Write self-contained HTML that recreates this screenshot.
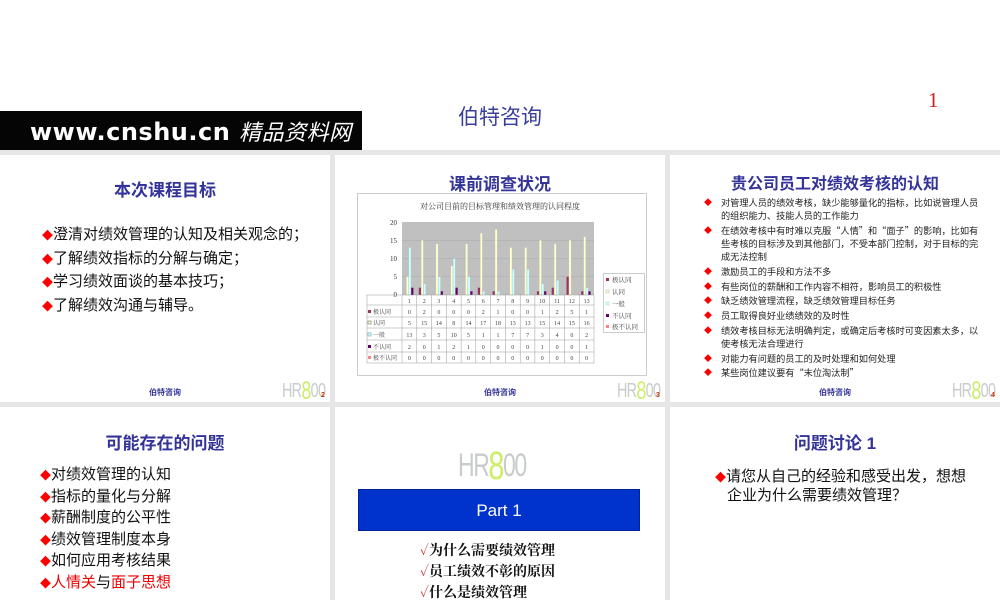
<!DOCTYPE html>
<html><head><meta charset="utf-8">
<style>
*{margin:0;padding:0;box-sizing:border-box}
body{width:1000px;height:600px;overflow:hidden;background:#fff;position:relative;font-family:"Liberation Sans","Noto Sans CJK SC",sans-serif}
.abs{position:absolute}
.p{position:absolute;background:#fff;overflow:hidden}
.t{position:absolute;left:0;right:0;text-align:center;color:#333399;font-weight:bold;font-family:"Liberation Sans","Noto Sans CJK SC",sans-serif}
.ft{position:absolute;left:0;right:0;text-align:center;color:#333399;font-size:8px;font-weight:bold}
.dm{color:#f00;font-size:11px}
.lg{position:absolute;font-family:"Liberation Sans",sans-serif;color:#c8cccc;letter-spacing:-1px;transform-origin:0 0;white-space:nowrap;line-height:1}
.lg b{color:#ccee66;font-weight:normal}
.sm{left:282px;top:222px;font-size:20px;transform:scaleX(0.72)}
.sm b{font-size:25px;position:relative;top:2px}
.it{position:relative;padding-left:17px;margin-bottom:1.5px}
.it .dm{position:absolute;left:0;font-size:8px}
</style></head><body>
<div class="abs" style="left:0;top:111px;width:362px;height:39px;background:#050505;"></div>
<div class="abs" style="left:30px;top:116px;color:#fff;font-size:24px;font-weight:bold;font-family:'DejaVu Sans',sans-serif;letter-spacing:0.5px;line-height:30px">www.cnshu.cn <i style="font-weight:normal;font-family:'Noto Sans CJK SC',sans-serif;font-size:22px">精品资料网</i></div>
<div class="abs" style="left:440px;top:103px;width:120px;text-align:center;color:#3a3f9a;font-size:21px;line-height:30px">伯特咨询</div>
<div class="abs" style="left:928px;top:88px;color:#cc2222;font-size:21px;font-family:'Liberation Serif',serif">1</div>
<div class="abs" style="left:0;top:150px;width:1000px;height:450px;background:#e6e6e6"></div>

<!-- panel 1 -->
<div class="p" style="left:0;top:155px;width:330px;height:247px">
<div class="t" style="top:21px;font-size:17px">本次课程目标</div>
<div class="abs" style="left:42px;top:69px;font-size:15px;line-height:22.5px;color:#111">
<div><span class="dm">◆</span>澄清对绩效管理的认知及相关观念的；</div>
<div><span class="dm">◆</span>了解绩效指标的分解与确定；</div>
<div><span class="dm">◆</span>学习绩效面谈的基本技巧；</div>
<div><span class="dm">◆</span>了解绩效沟通与辅导。</div></div>
<div class="ft" style="top:232px">伯特咨询</div>
<div class="lg sm">HR<b>8</b>00</div>
<div class="abs" style="left:321px;top:237px;color:#cc3300;font-size:7px;font-weight:bold">2</div>
</div>

<!-- panel 2 -->
<div class="p" style="left:335px;top:155px;width:330px;height:247px">
<div class="t" style="top:15px;font-size:17px">课前调查状况</div>
<div class="ft" style="top:232px">伯特咨询</div>
<div class="lg sm">HR<b>8</b>00</div>
<div class="abs" style="left:321px;top:237px;color:#cc3300;font-size:7px;font-weight:bold">3</div>
</div>
<svg class="abs" style="left:0;top:0" width="1000" height="600" font-family="Liberation Serif,Noto Serif CJK SC,serif">
<rect x="357.5" y="193.5" width="289" height="182" fill="#fff" stroke="#ccc"/>
<text x="500" y="209" font-size="8" text-anchor="middle" fill="#333">对公司目前的目标管理和绩效管理的认同程度</text>
<rect x="402" y="222" width="192" height="73" fill="#c0c0c0"/>
<g stroke="#aaa" stroke-width="0.5"><line x1="402" y1="240.25" x2="594" y2="240.25"/><line x1="402" y1="258.5" x2="594" y2="258.5"/><line x1="402" y1="276.75" x2="594" y2="276.75"/></g>
<g font-size="7" fill="#333" text-anchor="end"><text x="397" y="225">20</text><text x="397" y="243">15</text><text x="397" y="261">10</text><text x="397" y="279">5</text><text x="397" y="297">0</text></g>
<g fill="#ffffcc" stroke="#bbb" stroke-width="0.3">
<rect x="406.4" y="276.7" width="2.2" height="18.3"/><rect x="421.2" y="240.2" width="2.2" height="54.8"/><rect x="435.9" y="243.9" width="2.2" height="51.1"/><rect x="450.7" y="265.8" width="2.2" height="29.2"/><rect x="465.5" y="243.9" width="2.2" height="51.1"/><rect x="480.2" y="233" width="2.2" height="62"/><rect x="495" y="229.3" width="2.2" height="65.7"/><rect x="509.8" y="247.5" width="2.2" height="47.5"/><rect x="524.6" y="247.5" width="2.2" height="47.5"/><rect x="539.3" y="240.2" width="2.2" height="54.8"/><rect x="554.1" y="243.9" width="2.2" height="51.1"/><rect x="568.9" y="240.2" width="2.2" height="54.8"/><rect x="583.6" y="236.6" width="2.2" height="58.4"/></g>
<g fill="#ccffff" stroke="#9cc" stroke-width="0.3">
<rect x="408.8" y="247.5" width="2.2" height="47.5"/><rect x="423.6" y="284" width="2.2" height="11"/><rect x="438.3" y="276.7" width="2.2" height="18.3"/><rect x="453.1" y="258.5" width="2.2" height="36.5"/><rect x="467.9" y="276.7" width="2.2" height="18.3"/><rect x="482.6" y="291.3" width="2.2" height="3.7"/><rect x="497.4" y="291.3" width="2.2" height="3.7"/><rect x="512.2" y="269.4" width="2.2" height="25.6"/><rect x="527" y="269.4" width="2.2" height="25.6"/><rect x="541.7" y="284" width="2.2" height="11"/><rect x="556.5" y="280.4" width="2.2" height="14.6"/><rect x="586" y="287.7" width="2.2" height="7.3"/></g>
<g fill="#993366">
<rect x="418.8" y="287.7" width="2.2" height="7.3"/><rect x="477.8" y="287.7" width="2.2" height="7.3"/><rect x="492.6" y="291.3" width="2.2" height="3.7"/><rect x="536.9" y="291.3" width="2.2" height="3.7"/><rect x="551.7" y="287.7" width="2.2" height="7.3"/><rect x="566.5" y="276.7" width="2.2" height="18.3"/><rect x="581.2" y="291.3" width="2.2" height="3.7"/></g>
<g fill="#660066">
<rect x="411.2" y="287.7" width="2.2" height="7.3"/><rect x="440.7" y="291.3" width="2.2" height="3.7"/><rect x="455.5" y="287.7" width="2.2" height="7.3"/><rect x="470.3" y="291.3" width="2.2" height="3.7"/><rect x="544.1" y="291.3" width="2.2" height="3.7"/><rect x="588.4" y="291.3" width="2.2" height="3.7"/></g>
<g stroke="#999" stroke-width="0.5" fill="none">
<rect x="367" y="295" width="227" height="68"/>
<line x1="367" y1="305" x2="594" y2="305"/><line x1="367" y1="317" x2="594" y2="317"/><line x1="367" y1="328" x2="594" y2="328"/><line x1="367" y1="340" x2="594" y2="340"/><line x1="367" y1="352" x2="594" y2="352"/>
<line x1="402" y1="295" x2="402" y2="363"/><line x1="416.8" y1="295" x2="416.8" y2="363"/><line x1="431.5" y1="295" x2="431.5" y2="363"/><line x1="446.3" y1="295" x2="446.3" y2="363"/><line x1="461.1" y1="295" x2="461.1" y2="363"/><line x1="475.8" y1="295" x2="475.8" y2="363"/><line x1="490.6" y1="295" x2="490.6" y2="363"/><line x1="505.4" y1="295" x2="505.4" y2="363"/><line x1="520.2" y1="295" x2="520.2" y2="363"/><line x1="534.9" y1="295" x2="534.9" y2="363"/><line x1="549.7" y1="295" x2="549.7" y2="363"/><line x1="564.5" y1="295" x2="564.5" y2="363"/><line x1="579.2" y1="295" x2="579.2" y2="363"/></g>
<g font-size="6" fill="#444" text-anchor="middle">
<text y="303"><tspan x="409.4">1</tspan><tspan x="424.2">2</tspan><tspan x="438.9">3</tspan><tspan x="453.7">4</tspan><tspan x="468.5">5</tspan><tspan x="483.2">6</tspan><tspan x="498">7</tspan><tspan x="512.8">8</tspan><tspan x="527.6">9</tspan><tspan x="542.3">10</tspan><tspan x="557.1">11</tspan><tspan x="571.9">12</tspan><tspan x="586.6">13</tspan></text>
<text y="314"><tspan x="409.4">0</tspan><tspan x="424.2">2</tspan><tspan x="438.9">0</tspan><tspan x="453.7">0</tspan><tspan x="468.5">0</tspan><tspan x="483.2">2</tspan><tspan x="498">1</tspan><tspan x="512.8">0</tspan><tspan x="527.6">0</tspan><tspan x="542.3">1</tspan><tspan x="557.1">2</tspan><tspan x="571.9">5</tspan><tspan x="586.6">1</tspan></text>
<text y="325"><tspan x="409.4">5</tspan><tspan x="424.2">15</tspan><tspan x="438.9">14</tspan><tspan x="453.7">8</tspan><tspan x="468.5">14</tspan><tspan x="483.2">17</tspan><tspan x="498">18</tspan><tspan x="512.8">13</tspan><tspan x="527.6">13</tspan><tspan x="542.3">15</tspan><tspan x="557.1">14</tspan><tspan x="571.9">15</tspan><tspan x="586.6">16</tspan></text>
<text y="337"><tspan x="409.4">13</tspan><tspan x="424.2">3</tspan><tspan x="438.9">5</tspan><tspan x="453.7">10</tspan><tspan x="468.5">5</tspan><tspan x="483.2">1</tspan><tspan x="498">1</tspan><tspan x="512.8">7</tspan><tspan x="527.6">7</tspan><tspan x="542.3">3</tspan><tspan x="557.1">4</tspan><tspan x="571.9">0</tspan><tspan x="586.6">2</tspan></text>
<text y="349"><tspan x="409.4">2</tspan><tspan x="424.2">0</tspan><tspan x="438.9">1</tspan><tspan x="453.7">2</tspan><tspan x="468.5">1</tspan><tspan x="483.2">0</tspan><tspan x="498">0</tspan><tspan x="512.8">0</tspan><tspan x="527.6">0</tspan><tspan x="542.3">1</tspan><tspan x="557.1">0</tspan><tspan x="571.9">0</tspan><tspan x="586.6">1</tspan></text>
<text y="360"><tspan x="409.4">0</tspan><tspan x="424.2">0</tspan><tspan x="438.9">0</tspan><tspan x="453.7">0</tspan><tspan x="468.5">0</tspan><tspan x="483.2">0</tspan><tspan x="498">0</tspan><tspan x="512.8">0</tspan><tspan x="527.6">0</tspan><tspan x="542.3">0</tspan><tspan x="557.1">0</tspan><tspan x="571.9">0</tspan><tspan x="586.6">0</tspan></text>
</g>
<g font-size="6" fill="#444">
<rect x="368" y="310" width="3" height="3" fill="#993366"/><text x="373" y="314">极认同</text>
<rect x="368" y="321" width="3" height="3" fill="#ffffcc" stroke="#aa9"/><text x="373" y="325">认同</text>
<rect x="368" y="333" width="3" height="3" fill="#ccffff" stroke="#9cc"/><text x="373" y="337">一般</text>
<rect x="368" y="345" width="3" height="3" fill="#660066"/><text x="373" y="349">不认同</text>
<rect x="368" y="356" width="3" height="3" fill="#ff8080"/><text x="373" y="360">极不认同</text>
</g>
<rect x="603.5" y="273.5" width="41" height="59" fill="#fff" stroke="#999" stroke-width="0.5"/>
<g font-size="6.5" fill="#444">
<rect x="606" y="278" width="3" height="3" fill="#993366"/><text x="612" y="282">极认同</text>
<rect x="606" y="290" width="3" height="3" fill="#ffffcc" stroke="#aa9" stroke-width="0.4"/><text x="612" y="294">认同</text>
<rect x="606" y="302" width="3" height="3" fill="#ccffff" stroke="#9cc" stroke-width="0.4"/><text x="612" y="306">一般</text>
<rect x="606" y="314" width="3" height="3" fill="#660066"/><text x="612" y="318">不认同</text>
<rect x="606" y="325" width="3" height="3" fill="#ff8080"/><text x="612" y="329">极不认同</text>
</g>
</svg>

<!-- panel 3 -->
<div class="p" style="left:670px;top:155px;width:330px;height:247px">
<div class="t" style="top:15px;font-size:16px">贵公司员工对绩效考核的认知</div>
<div class="abs" style="left:34px;top:41px;width:278px;font-size:9.2px;line-height:13.2px;color:#222;font-family:'Noto Sans CJK SC',sans-serif">
<div class="it"><span class="dm">◆</span>对管理人员的绩效考核，缺少能够量化的指标，比如说管理人员的组织能力、技能人员的工作能力</div>
<div class="it"><span class="dm">◆</span>在绩效考核中有时难以克服“人情”和“面子”的影响，比如有些考核的目标涉及到其他部门，不受本部门控制，对于目标的完成无法控制</div>
<div class="it"><span class="dm">◆</span>激励员工的手段和方法不多</div>
<div class="it"><span class="dm">◆</span>有些岗位的薪酬和工作内容不相符，影响员工的积极性</div>
<div class="it"><span class="dm">◆</span>缺乏绩效管理流程，缺乏绩效管理目标任务</div>
<div class="it"><span class="dm">◆</span>员工取得良好业绩绩效的及时性</div>
<div class="it"><span class="dm">◆</span>绩效考核目标无法明确判定，或确定后考核时可变因素太多，以使考核无法合理进行</div>
<div class="it"><span class="dm">◆</span>对能力有问题的员工的及时处理和如何处理</div>
<div class="it"><span class="dm">◆</span>某些岗位建议要有“末位淘汰制”</div>
</div>
<div class="ft" style="top:232px">伯特咨询</div>
<div class="lg sm">HR<b>8</b>00</div>
<div class="abs" style="left:321px;top:237px;color:#cc3300;font-size:7px;font-weight:bold">4</div>
</div>

<!-- panel 4 -->
<div class="p" style="left:0;top:407px;width:330px;height:193px">
<div class="t" style="top:22px;font-size:17px">可能存在的问题</div>
<div class="abs" style="left:40px;top:58px;font-size:15px;line-height:20.5px;color:#111">
<div><span class="dm">◆</span>对绩效管理的认知</div>
<div><span class="dm">◆</span>指标的量化与分解</div>
<div><span class="dm">◆</span>薪酬制度的公平性</div>
<div><span class="dm">◆</span>绩效管理制度本身</div>
<div><span class="dm">◆</span>如何应用考核结果</div>
<div><span class="dm">◆</span><span style="color:#e00">人情关</span>与<span style="color:#e00">面子思想</span></div></div>
</div>

<!-- panel 5 -->
<div class="p" style="left:335px;top:407px;width:330px;height:193px">
<div class="lg" style="left:123px;top:36px;font-size:32px;transform:scaleX(0.72);letter-spacing:-2px">HR<b style="font-size:40px;position:relative;top:3px">8</b>00</div>
<div class="abs" style="left:23px;top:82px;width:282px;height:42px;background:#0033cc;border:1px solid #002299;color:#fff;font-size:17px;text-align:center;line-height:42px">Part 1</div>
<div class="abs" style="left:85px;top:134px;font-size:14px;line-height:21px;font-weight:bold;color:#111;font-family:'Liberation Serif','Noto Serif CJK SC',serif">
<div><span style="color:#c33;font-weight:normal">✓</span>为什么需要绩效管理</div>
<div><span style="color:#c33;font-weight:normal">✓</span>员工绩效不彰的原因</div>
<div><span style="color:#c33;font-weight:normal">✓</span>什么是绩效管理</div></div>
</div>

<!-- panel 6 -->
<div class="p" style="left:670px;top:407px;width:330px;height:193px">
<div class="t" style="top:22px;font-size:17px">问题讨论 1</div>
<div class="abs" style="left:45px;top:61px;width:260px;font-size:15px;line-height:18px;color:#111;padding-left:12px;text-indent:-12px"><span class="dm">◆</span>请您从自己的经验和感受出发，想想企业为什么需要绩效管理？</div>
</div>
</body></html>
